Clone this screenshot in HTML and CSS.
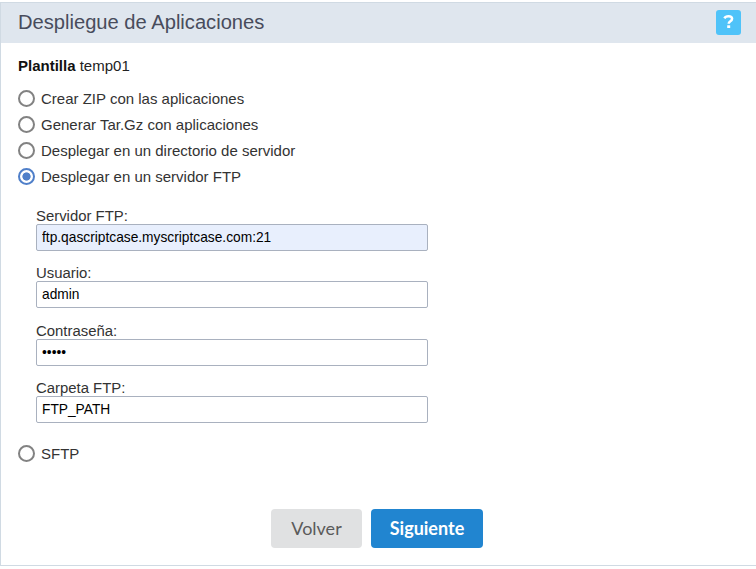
FILE: index.html
```
<!DOCTYPE html>
<html lang="es">
<head>
  <meta charset="UTF-8" />
  <title>Despliegue de Aplicaciones</title>
  <link rel="stylesheet" href="styles.css">
</head>
<body>
  <div class="panel">
    <div class="header">
      <h1>Despliegue de Aplicaciones</h1>
      <a class="help" href="#" title="Ayuda">
        <svg width="25" height="25" viewBox="0 0 25 25" fill="none">
          <path d="M8.4 8.3C9.2 6.8 10.5 6.2 12.4 6.2C14.7 6.2 16.1 7.1 16.1 8.8C16.1 10.4 15 11 14 11.6C13 12.2 12.7 12.6 12.7 13.8" stroke="#fff" stroke-width="2.5"/>
          <rect x="11.2" y="15.3" width="3" height="2.7" fill="#fff"/>
        </svg>
      </a>
    </div>

    <form class="content">
      <p class="template"><strong>Plantilla</strong> temp01</p>

      <div class="options">
        <label class="option"><input type="radio" name="deploy" value="zip"> <span>Crear ZIP con las aplicaciones</span></label>
        <label class="option"><input type="radio" name="deploy" value="tar"> <span>Generar Tar.Gz con aplicaciones</span></label>
        <label class="option"><input type="radio" name="deploy" value="dir"> <span>Desplegar en un directorio de servidor</span></label>
        <label class="option"><input type="radio" name="deploy" value="ftp" checked> <span>Desplegar en un servidor FTP</span></label>
      </div>

      <div class="ftp-fields">
        <div class="field">
          <label for="server">Servidor FTP:</label>
          <input type="text" id="server" class="filled" value="ftp.qascriptcase.myscriptcase.com:21">
        </div>
        <div class="field login">
          <label for="user">Usuario:</label>
          <input type="text" id="user" value="admin">
        </div>
        <div class="field">
          <label for="pass">Contraseña:</label>
          <input type="password" id="pass" value="admin">
        </div>
        <div class="field">
          <label for="folder">Carpeta FTP:</label>
          <input type="text" id="folder" value="FTP_PATH">
        </div>
      </div>

      <label class="option"><input type="radio" name="deploy" value="sftp"> <span>SFTP</span></label>

      <div class="buttons">
        <button type="button" class="btn">Volver</button>
        <button type="button" class="btn primary">Siguiente</button>
      </div>
    </form>
  </div>
</body>
</html>
```

FILE: styles.css
```
* {
  box-sizing: border-box;
}

body {
  margin: 0;
  padding-top: 2px;
  background: #fff;
  color: #333;
  font-family: "Liberation Sans", Arial, sans-serif;
  font-size: 15px;
  overflow: hidden;
}

.panel {
  height: 564px;
  border: 1px solid #d0dae3;
  border-right: none;
}

.header {
  display: flex;
  align-items: center;
  justify-content: space-between;
  height: 40px;
  padding: 0 15px 0 17px;
  background: #dfe6ee;
}

.header h1 {
  margin: 0 0 2px;
  color: #484c5c;
  font-size: 20.15px;
  font-weight: normal;
}

.help {
  width: 25px;
  height: 25px;
  margin-bottom: 1px;
  border-radius: 3px;
  background: #4fc3f9;
}

.help svg {
  display: block;
}

.content {
  padding: 14px 0 0 17px;
}

.template {
  margin: 0 0 10px;
  line-height: 18px;
  color: #222;
}

.template strong {
  color: #111;
}

.option {
  display: flex;
  align-items: center;
  height: 26px;
}

.option input {
  appearance: none;
  width: 17px;
  height: 17px;
  margin: 0 6px 0 0;
  border: 2px solid #828282;
  border-radius: 50%;
  background: #fff;
}

.option input:checked {
  border-color: #4f7fc9;
  background: radial-gradient(circle, #4f7fc9 3.7px, #fff 4.5px);
}

.ftp-fields {
  width: 392px;
  margin: 18px 0 17px 18px;
}

.field {
  margin-bottom: 13px;
}

.field.login {
  margin-bottom: 14px;
}

.field label {
  display: block;
  height: 17px;
  font-size: 14.9px;
  line-height: 18px;
}

.field input {
  display: block;
  width: 100%;
  height: 27px;
  padding: 0 5px 1px;
  border: 1px solid #a9b1bf;
  border-radius: 2px;
  background: #fff;
  color: #000;
  font-family: "Liberation Sans", Arial, sans-serif;
  font-size: 13.75px;
}

.field input.filled {
  background: #e8effd;
}

.buttons {
  display: flex;
  justify-content: center;
  gap: 9px;
  width: 718px;
  margin-top: 43px;
}

.btn {
  width: 91px;
  height: 39px;
  padding: 0 0 2px;
  border: none;
  border-radius: 4px;
  background: #e0e1e2;
  color: #5a5a5a;
  font-family: Lato, sans-serif;
  font-size: 18px;
}

.btn.primary {
  width: 112px;
  background: #2185d0;
  color: #fff;
  font-weight: bold;
}
```
